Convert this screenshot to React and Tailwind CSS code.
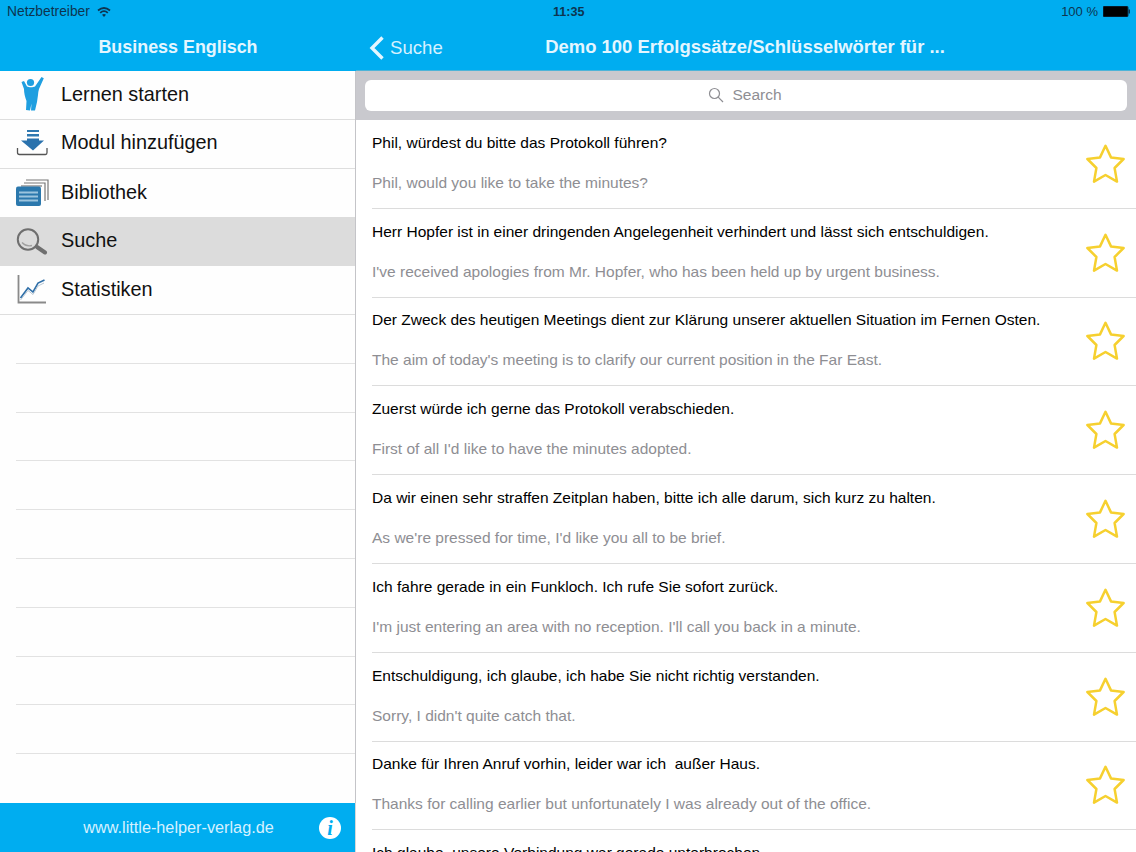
import React from "react";

const rows = [
  ["Phil, würdest du bitte das Protokoll führen?", "Phil, would you like to take the minutes?"],
  ["Herr Hopfer ist in einer dringenden Angelegenheit verhindert und lässt sich entschuldigen.", "I've received apologies from Mr. Hopfer, who has been held up by urgent business."],
  ["Der Zweck des heutigen Meetings dient zur Klärung unserer aktuellen Situation im Fernen Osten.", "The aim of today's meeting is to clarify our current position in the Far East."],
  ["Zuerst würde ich gerne das Protokoll verabschieden.", "First of all I'd like to have the minutes adopted."],
  ["Da wir einen sehr straffen Zeitplan haben, bitte ich alle darum, sich kurz zu halten.", "As we're pressed for time, I'd like you all to be brief."],
  ["Ich fahre gerade in ein Funkloch. Ich rufe Sie sofort zurück.", "I'm just entering an area with no reception. I'll call you back in a minute."],
  ["Entschuldigung, ich glaube, ich habe Sie nicht richtig verstanden.", "Sorry, I didn't quite catch that."],
  ["Danke für Ihren Anruf vorhin, leider war ich\u00a0 außer Haus.", "Thanks for calling earlier but unfortunately I was already out of the office."],
  ["Ich glaube, unsere Verbindung war gerade unterbrochen.", ""],
];

const Person = () => (
  <svg width="30" height="36" viewBox="0 0 30 36" fill="#1f9fe0">
    <circle cx="14.5" cy="6.5" r="3.6" />
    <path d="M5.5 6 L8 5 L11 10.5 C13 11.5 17 11.5 19 10.5 L25.5 1 L27.8 2.2 L23 13 C22.5 15 22 17 22 19 L21 26 L19 34.5 L15 34.5 L15.5 27.5 L14 34.5 L10 34 L10.5 25 C9 21 8 17 8 13 Z" />
  </svg>
);
const Download = () => (
  <svg width="32" height="26" viewBox="0 0 32 26" fill="none">
    <rect x="11" y="0" width="12" height="2" fill="#2f78b0" />
    <rect x="11" y="4" width="12" height="2.5" fill="#2f78b0" />
    <path d="M11 8.5 H23 V10.5 H28 L17 20.5 L5 10.5 H11 Z" fill="#2a72ad" />
    <path d="M1.5 18 V22.5 Q1.5 24.5 3.5 24.5 H29.5 Q31 24.5 31 22.5 V18" stroke="#555" strokeWidth="1.3" />
  </svg>
);
const Library = () => (
  <svg width="33" height="27" viewBox="0 0 33 27" fill="none">
    <path d="M10 1 H32 V21" stroke="#777" strokeWidth="1.2" />
    <path d="M8 4 H29 V22" stroke="#777" strokeWidth="1.2" />
    <path d="M5 7 H26" stroke="#777" strokeWidth="1.2" />
    <rect x="0" y="7.5" width="25" height="19.5" rx="2" fill="#2b78ad" />
    <rect x="3" y="12.5" width="19" height="2" fill="#9cc4de" />
    <rect x="3" y="16.5" width="19" height="2" fill="#9cc4de" />
    <rect x="3" y="20.5" width="19" height="2" fill="#9cc4de" />
  </svg>
);
const Magnifier = () => (
  <svg width="32" height="27" viewBox="0 0 32 27" fill="none">
    <circle cx="12" cy="11.5" r="10.2" stroke="#6f6f6f" strokeWidth="2" />
    <path d="M6 14.5 Q10 19 16 17.5" stroke="#a0a0a0" strokeWidth="1.3" />
    <path d="M21 19 L29 24.5" stroke="#6f6f6f" strokeWidth="4" strokeLinecap="round" />
  </svg>
);
const Chart = () => (
  <svg width="32" height="29" viewBox="0 0 32 29" fill="none">
    <path d="M2.5 0 V27.5 H30" stroke="#8a8a8a" strokeWidth="1.8" />
    <path d="M4.5 23 L12 13 L17 17 L22 8 L28.5 5" stroke="#2f6fa8" strokeWidth="1.6" />
    <path d="M4.5 25 L12 15.5 L17 19.5 L22 11 L28 8" stroke="#b9c6d2" strokeWidth="1" />
  </svg>
);

const menu = [
  ["Lernen starten", <Person />],
  ["Modul hinzufügen", <Download />],
  ["Bibliothek", <Library />],
  ["Suche", <Magnifier />],
  ["Statistiken", <Chart />],
];

const Star = () => (
  <svg width="40" height="40" viewBox="0 0 40 40" fill="none" className="shrink-0">
    <path
      d="M19.5 1.8 L25 13.4 L37.6 15 L28.6 24 L31 37.6 L19.5 31 L8 37.6 L10.4 24 L1.4 15 L14 13.4 Z"
      stroke="#f6d02f"
      strokeWidth="2.5"
      strokeLinejoin="round"
    />
  </svg>
);

export default function App() {
  return (
    <div className="flex h-[852px] w-[1136px] overflow-hidden bg-white text-black font-['Liberation_Sans',Arial,sans-serif]">
      <aside className="flex h-full w-[356px] shrink-0 flex-col">
        <header className="h-[71px] shrink-0 bg-[#00adf0]">
          <div className="flex h-[23px] items-center gap-[7px] pl-[7px] pt-[1px] text-[13.8px] text-[#0d3550]">
            <span>Netzbetreiber</span>
            <svg width="14" height="10" viewBox="0 0 14 10" fill="none" stroke="#0d3550" strokeWidth="1.8">
              <path d="M1 3.5 Q7 -1.5 13 3.5" />
              <path d="M3.2 5.8 Q7 2.4 10.8 5.8" />
              <path d="M7 10 L5 7.8 Q7 6.2 9 7.8 Z" fill="#0d3550" stroke="none" />
            </svg>
          </div>
          <div className="flex h-[48px] items-center justify-center text-[17.9px] font-bold text-[#e4f6ff]">Business Englisch</div>
        </header>
        <nav className="min-h-0 flex-1 overflow-hidden border-r border-[#c4c4c8] bg-[#fefefe]">
          {menu.map(([label, icon], i) => (
            <div key={label} className={`h-[48.8px] ${i === 3 ? "bg-[#dcdcdc]" : ""}`}>
              <div className={`flex h-full items-center pb-[1px] pl-[16px] ${i === 3 || i === 2 ? "" : "border-b border-[#dedede]"}`}>
                <div className="flex w-[45px] shrink-0 items-center justify-start">{icon}</div>
                <span className="text-[19.85px] text-[#111]">{label}</span>
              </div>
            </div>
          ))}
          {Array.from({ length: 9 }).map((_, i) => (
            <div key={i} className="ml-[16px] h-[48.8px] border-b border-[#e2e2e2]" />
          ))}
        </nav>
        <footer className="relative flex h-[49px] shrink-0 items-center justify-center border-r border-[#d8d8d8] bg-[#00adf0] pl-[2px] text-[16.25px] text-[#d6f1ff]">
          <span>www.little-helper-verlag.de</span>
          <span className="absolute right-[14px] top-[14px] flex h-[22px] w-[22px] items-center justify-center rounded-full bg-white font-['Liberation_Serif',serif] text-[20px] font-bold italic text-[#00adf0]">i</span>
        </footer>
      </aside>
      <main className="flex h-full min-w-0 flex-1 flex-col">
        <header className="h-[71px] shrink-0 border-b border-[#4db4d8] bg-[#00adf0]">
          <div className="relative flex h-[23px] items-center pl-[197px] pt-[1px] text-[12.6px] font-bold text-[#0d3550]">
            <span>11:35</span>
            <div className="absolute right-[6px] top-[2px] flex items-center gap-[5px] text-[13px] font-normal">
              <span>100 %</span>
              <svg width="27" height="11" viewBox="0 0 27 11">
                <rect x="0" y="0" width="25" height="11" rx="1.5" fill="#000" stroke="#0d3550" />
                <rect x="25.5" y="3.5" width="1.5" height="4" fill="#0d3550" />
              </svg>
            </div>
          </div>
          <div className="relative flex h-[47px] items-center justify-center pr-[2px]">
            <div className="absolute left-[13px] top-[11px] flex items-center gap-[6px] text-[#d6f1ff]">
              <svg width="15" height="24" viewBox="0 0 15 24" fill="none" stroke="#e4f6ff" strokeWidth="3.4">
                <path d="M13.5 1.5 L3 12 L13.5 22.5" />
              </svg>
              <span className="text-[18.6px]">Suche</span>
            </div>
            <span className="text-[18.45px] font-bold text-[#e4f6ff]">Demo 100 Erfolgssätze/Schlüsselwörter für ...</span>
          </div>
        </header>
        <div className="flex h-[49px] shrink-0 items-center bg-[#c9c9ce] px-[9px] pb-[1px]">
          <div className="flex h-[31px] flex-1 items-center justify-center gap-[8px] rounded-[6px] bg-white pr-[2px] text-[15.5px] text-[#8e8e93]">
            <svg width="16" height="16" viewBox="0 0 16 16" fill="none" stroke="#8e8e93" strokeWidth="1.2">
              <circle cx="6.5" cy="6.5" r="5" />
              <path d="M10.2 10.2 L15 15" />
            </svg>
            <span>Search</span>
          </div>
        </div>
        <div className="min-h-0 flex-1 overflow-hidden">
          {rows.map(([de, en], i) => (
            <div key={i} className="h-[88.8px] pl-[16px]">
              <div className="flex h-full items-center border-b border-[#dcdcdc] pr-[10px]">
                <div className="flex min-w-0 flex-1 flex-col pb-[2px]">
                  <div className="h-[26px] text-[15.52px] leading-[26px] text-black whitespace-nowrap">{de}</div>
                  <div className="mt-[14px] h-[26px] text-[15.52px] leading-[26px] text-[#8e8e93] whitespace-nowrap">{en}</div>
                </div>
                <Star />
              </div>
            </div>
          ))}
        </div>
      </main>
    </div>
  );
}
